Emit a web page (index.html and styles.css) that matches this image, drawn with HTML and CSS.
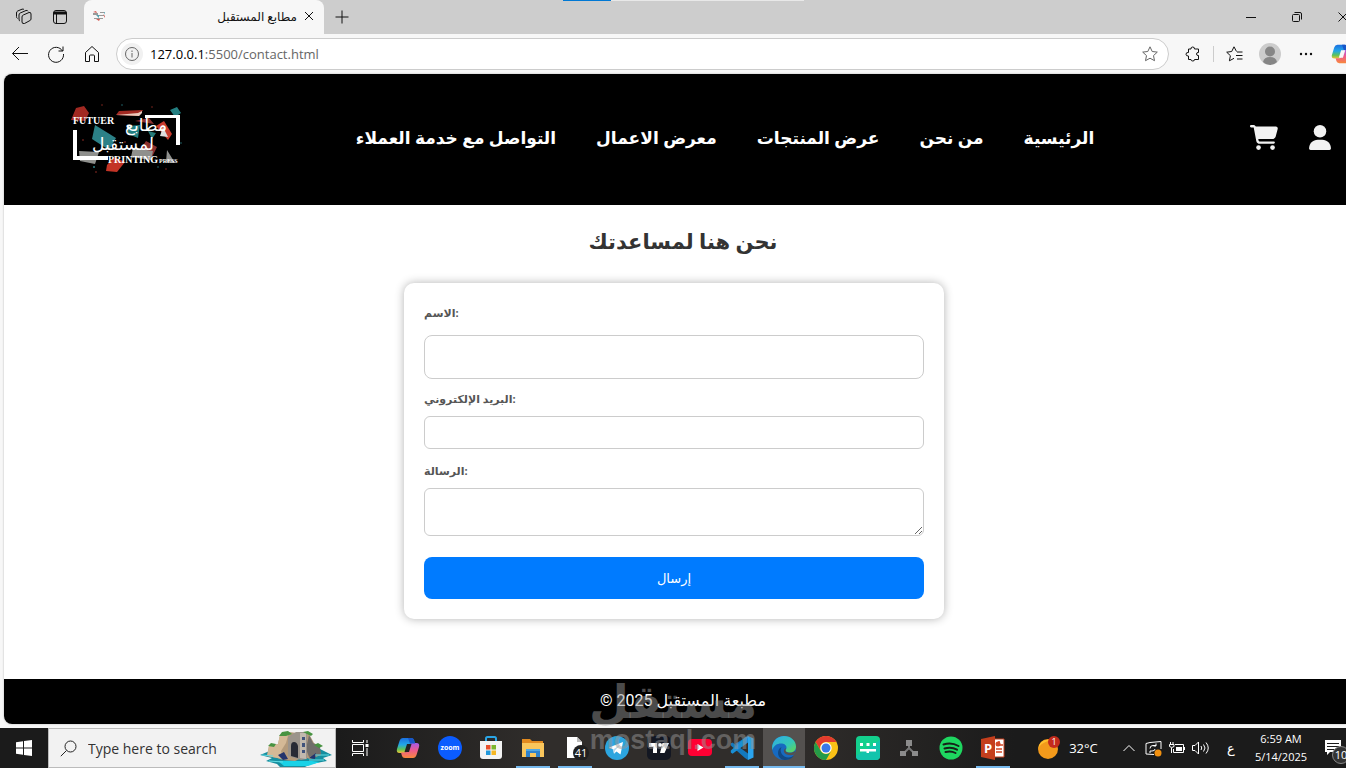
FILE: index.html
```html
<!doctype html>
<html lang="ar">
	<head>
		<meta charset="utf-8" />
		<meta name="viewport" content="width=device-width, initial-scale=1" />
		<title>مطابع المستقبل</title>
		<link rel="stylesheet" href="styles.css">
	</head>
	<body>
		<svg class="defs" width="0" height="0" aria-hidden="true">
			<defs>
				<linearGradient id="cpA" x1="0" y1="0" x2="0" y2="1"><stop offset="0" stop-color="#1b6fe0"/><stop offset=".45" stop-color="#22a7e8"/><stop offset=".75" stop-color="#5cc35a"/><stop offset="1" stop-color="#f2c431"/></linearGradient>
				<linearGradient id="cpB" x1="0" y1="0" x2="0" y2="1"><stop offset="0" stop-color="#a45ae8"/><stop offset=".5" stop-color="#ee5a8c"/><stop offset="1" stop-color="#f8893c"/></linearGradient>
				<linearGradient id="edgeA" x1="0" y1="0" x2="1" y2="1"><stop offset="0" stop-color="#2fa9e8"/><stop offset=".6" stop-color="#35c8b4"/><stop offset="1" stop-color="#66d84a"/></linearGradient>
				<symbol id="copilot" viewBox="0 0 24 24">
					<path d="M7 2h8q2.500 0 3 2l1 3.500h-4q-2 0-2.500 2l-1.500 5Q10.200 17 8 17H3.500Q0 17 1 13L3.500 5Q4.500 2 7 2z" fill="url(#cpA)"/>
					<path d="M17 22H9q-2.500 0-3-2l-1-3.500h4q2 0 2.500-2l1.500-5Q13.800 7 16 7h4.500Q24 7 23 11l-2.500 8Q19.500 22 17 22z" fill="url(#cpB)"/>
					<path d="M11 8h4.500l-2.500 8H8.500z" fill="currentColor"/>
					<path d="M12 2h3q2.500 0 3 2l1 3.500h-5z" fill="#1756c8"/>
				</symbol>
			</defs>
		</svg>

		<div class="window">
			<div class="progress"></div>
			<!-- tabs -->
			<div class="tabbar">
				<button class="tool" aria-label="Workspaces">
					<svg width="18" height="18" viewBox="0 0 18 18"><path d="M7 9q0-1.500 1.300-2l5.700-2.500q2-.5 2 1.500v5q0 1-1 1.500L9.500 15.500Q7 16 7 14z M5 13q-1 0-1-2V7q0-1.500 1.200-2L11 2.500q1.500-.5 2 .8 M2.500 10.500Q1.500 10 1.500 8.500V5q0-1.500 1.200-2L7 1.200q1.500-.5 2 .5" /></svg>
				</button>
				<button class="tool" aria-label="Tab actions">
					<svg width="16" height="16" viewBox="0 0 16 16"><rect x="1.500" y="1.500" width="13" height="13" rx="2.500" /><path d="M2 3h12v2H2z" fill="#111" /><path d="M4.500 5v9" /></svg>
				</button>
				<div class="tab">
					<svg width="14" height="14" viewBox="0 0 14 14" class="plain"><path d="M1 4h5v2H1zM8 3h4v1H8zM7 6h5v1H7zM2 9h9v1H2z" fill="#999"/><path d="M1 3l3-1 1 2zM4 10l3 2 1-2zM11 5l2 2 0 2z" fill="#d55a52"/><path d="M4 6l3 0 0 3zM12 3l1 0 0 3z" fill="#54a3b1"/></svg>
					<span class="tab-title" dir="rtl">مطابع المستقبل</span>
					<button class="tab-close" aria-label="Close tab"><svg width="10" height="10" viewBox="0 0 10 10"><path d="M1 1l8 8M9 1l-8 8" /></svg></button>
				</div>
				<button class="tool" aria-label="New tab"><svg width="14" height="14" viewBox="0 0 14 14"><path d="M7 .5v13M.5 7h13" /></svg></button>
				<div class="winctl">
					<button aria-label="Minimize"><svg width="10" height="10" viewBox="0 0 10 10"><path d="M0 5.500h10" /></svg></button>
					<button aria-label="Restore"><svg width="12" height="12" viewBox="0 0 12 12"><rect x="1.500" y="3.500" width="7" height="7" rx="1" /><path d="M3.500 1.500H9q1.500 0 1.500 1.500v5.500" /></svg></button>
					<button aria-label="Close"><svg width="10" height="10" viewBox="0 0 10 10"><path d="M.5.500l9 9M9.500.500l-9 9" /></svg></button>
				</div>
			</div>

			<!-- toolbar -->
			<div class="toolbar">
				<button class="tool" aria-label="Back"><svg width="18" height="18" viewBox="0 0 18 18"><path d="M17 8.500H1.500M8 2L1.500 8.500 8 15" /></svg></button>
				<button class="tool" aria-label="Reload"><svg width="18" height="18" viewBox="0 0 18 18"><path d="M15.500 6A7.500 7.500 0 1 0 16.500 9M16 1.500V6h-4.500" /></svg></button>
				<button class="tool" aria-label="Home"><svg width="16" height="18" viewBox="0 0 16 18"><path d="M1.500 7.500L8 1.500l6.500 6V16.500h-4V11q0-1-1-1h-3q-1 0-1 1v5.500h-4z" /></svg></button>
				<div class="address">
					<span class="info"><svg width="14" height="14" viewBox="0 0 14 14"><circle cx="7" cy="7" r="6.500" /><path d="M7 6v4.500M7 3.500V5" /></svg></span>
					<a class="url" href="contact.html"><b>127.0.0.1</b>:5500/contact.html</a>
					<button class="star" aria-label="Add to favorites"><svg width="16" height="16" viewBox="0 0 16 16"><path d="M8 .8l2.200 4.700 5.100.6-3.800 3.500 1 5.100L8 12.200l-4.500 2.500 1-5.100L.7 6.100l5.100-.6z" /></svg></button>
				</div>
				<button class="tool" aria-label="Extensions"><svg width="16" height="16" viewBox="0 0 16 16"><path d="M3.500 3H6q-.3-2 1.700-2T9.500 3H13.500V6.500q-2-.3-2 1.500t2 1.500v4H9.500q.1 1.500-1.700 1.500T6 13.500H3.500V10Q1 10.200 1 8.200T3.500 6.500z" /></svg></button>
				<span class="divider"></span>
				<button class="tool" aria-label="Favorites"><svg width="17" height="16" viewBox="0 0 17 16"><path d="M10.500 5.500L8 .8 5.700 5.500.7 6.200l3.700 3.500-1 5.100L8 12.300M11 6h5.500M10 9.500h6.500M11 13h5.500" /></svg></button>
				<button class="tool" aria-label="Profile"><svg width="22" height="22" viewBox="0 0 22 22" class="plain"><circle cx="11" cy="11" r="11" fill="#ccc"/><circle cx="11" cy="8.500" r="5" fill="#868686"/><path d="M4 19q1-5 7-5t7 5q-3 3-7 3t-7-3z" fill="#868686"/></svg></button>
				<button class="tool" aria-label="Settings and more"><svg width="14" height="4" viewBox="0 0 14 4" class="plain"><circle cx="2" cy="2" r="1.200"/><circle cx="7" cy="2" r="1.200"/><circle cx="12" cy="2" r="1.200"/></svg></button>
				<button class="tool copilot-light" aria-label="Copilot"><svg width="22" height="22" class="plain"><use href="#copilot" /></svg></button>
			</div>

			<!-- web page -->
			<div class="page">
				<header class="site-header">
					<a class="logo" href="#" aria-label="Futuer Printing Press">
						<svg width="150" height="90" viewBox="0 0 150 90">
							<path d="M21 27l5-12 8-2 5 7-4 8zM66 22l3-4 24-1-4 6z" fill="#a12922"/>
							<path d="M66 22l23 1 3-3v-2l-4 2z" fill="#e9c9bb"/>
							<path d="M106 33l8-5 8 13-4 6z" fill="#c73a2c"/>
							<path d="M113 34l5 10-8-1z" fill="#ddd"/>
							<path d="M45 32l21 13-7 12-17-11z" fill="#2c8187"/>
							<path d="M77 33l13-1-2 13-10-4zM120 17l7-3 4 6-6 4z" fill="#237e80"/>
							<path d="M96 48l11 6-5 10-12-7zM85 28l14-3 5 6z" fill="#8c3230"/>
							<path d="M29 58l20 1-4 12-15-3zM83 55l20 3-2 9-20-3zM117 57l8 13-9-1z" fill="#8f908d"/>
							<path d="M57 72l7-8 11 5-8 10-11-1z" fill="#c33426"/>
							<path d="M98 38l8 2-4 6z" fill="#257b79"/>
							<g fill="#9d3028"><circle cx="52" cy="12" r=".7"/><circle cx="33" cy="47" r=".8"/><circle cx="46" cy="79" r=".8"/><circle cx="102" cy="14" r=".7"/><circle cx="116" cy="76" r=".7"/><circle cx="75" cy="49" r=".8"/></g>
							<g fill="#2c8187"><circle cx="72" cy="12" r=".7"/><circle cx="44" cy="74" r="1"/><circle cx="108" cy="74" r=".7"/><circle cx="131" cy="50" r=".7"/></g>
							<path d="M95 22h35v30h-4V25H95zM23 37h4v26h31v4H23z" fill="#fff"/>
							<text x="23" y="31" class="logo-lat">FUTUER</text>
							<text x="117" y="38" class="logo-ar">مطابع</text>
							<text x="104" y="57" class="logo-ar">لمستقبل</text>
							<text x="58" y="70" class="logo-lat">PRINTING</text>
							<text x="109" y="70" class="logo-sub">PRESS</text>
						</svg>
					</a>
					<nav class="site-nav" dir="rtl">
						<a href="#">الرئيسية</a>
						<a href="#">من نحن</a>
						<a href="#">عرض المنتجات</a>
						<a href="#">معرض الاعمال</a>
						<a href="#">التواصل مع خدمة العملاء</a>
					</nav>
					<div class="site-icons">
						<a href="#" aria-label="Cart"><svg width="28" height="25" viewBox="0 0 576 512"><path d="M0 24C0 10.700 10.700 0 24 0h45.500c22 0 41.500 12.800 50.600 32h411c26.300 0 45.500 25 38.600 50.400l-41 152.300c-8.500 31.400-37 53.300-69.500 53.300H170.700l5.400 28.500c2.200 11.300 12.100 19.500 23.600 19.500H488c13.300 0 24 10.700 24 24s-10.700 24-24 24H199.700c-34.600 0-64.300-24.600-70.700-58.500L77.400 54.500c-.7-3.800-4-6.500-7.900-6.500H24C10.700 48 0 37.300 0 24z"/><circle cx="176" cy="464" r="48"/><circle cx="464" cy="464" r="48"/></svg></a>
						<a href="#" aria-label="Account"><svg width="22" height="25" viewBox="0 0 448 512"><circle cx="224" cy="128" r="128"/><path d="M178.300 304C79.800 304 0 383.800 0 482.300 0 498.700 13.300 512 29.700 512h388.600c16.400 0 29.700-13.300 29.700-29.700C448 383.800 368.200 304 269.700 304z"/></svg></a>
					</div>
				</header>

				<main class="contact">
					<h1 dir="rtl">نحن هنا لمساعدتك</h1>
					<form class="card">
						<label for="name">الاسم:</label>
						<input type="text" id="name" class="field tall" />
						<label for="email">البريد الإلكتروني:</label>
						<input type="email" id="email" class="field" />
						<label for="message">الرسالة:</label>
						<textarea id="message" class="field area"></textarea>
						<button type="button" class="send">إرسال</button>
					</form>
				</main>

				<footer class="site-footer">© 2025 مطبعة المستقبل</footer>
			</div>

			<div class="watermark">
				<span class="wm-ar">مستقل</span>
				<span class="wm-lat">mostaql.com</span>
			</div>

			<!-- taskbar -->
			<div class="taskbar">
				<button class="start" aria-label="Start"><svg width="16" height="16" viewBox="0 0 16 16"><path d="M0 2.200L7 1.200v6.300H0zM8 1l8-1v7.500H8zM0 8.500h7v6.300l-7-1zM8 8.500h8V16l-8-1z" fill="#fff"/></svg></button>
				<div class="search">
					<svg width="17" height="17" viewBox="0 0 17 17"><circle cx="10.500" cy="6.500" r="5.500" fill="none" stroke="#222"/><path d="M6.500 10.500L.8 16.200" stroke="#222"/></svg>
					<input type="text" placeholder="Type here to search" aria-label="Type here to search" />
					<svg class="scene" width="72" height="38" viewBox="0 0 72 38">
						<path d="M0 26l12-5 48-1 12 6-9 3 4 3-16 3-6 3H20l-3-3-11-3 6-3z" fill="#168e9f"/>
						<path d="M18 32h34l8 1-12 4H24z" fill="#19d2e7"/>
						<path d="M7 27l2-10 9-2 2-9 9-3 8 1 12 1 5 9 5 3 2 9-11 4-6-2-9 4-12-1-6-2z" fill="#b39a7b"/>
						<path d="M7 27l2-10 9-2 2-9 9-3-3 11-5 8 2 8z" fill="#d4b996"/>
						<path d="M49 6l4 8 7 4 1 8-12 2-3-8z" fill="#716e6b"/>
						<path d="M28 8l8-5h11v27l-6 1-13-4z" fill="#9b948c"/>
						<path d="M40 4h6v26l-6-1z" fill="#c1b9ae"/>
						<path d="M31 27V17q0-4 3-4t4 4v12z" fill="#272a35"/>
						<path d="M42 8h3v3h-3zM42 14h3v4h-3zM42 21h3v3h-3z" fill="#3f537c"/>
						<path d="M18 26l6-3 4 7-5 1zM49 29l7-5-1 6z" fill="#23336c"/>
						<path d="M19 7l3-4 6-1 4 3-6 2zM8 17l3-3 5 1-2 3zM43 3l5-1 5 3-2 2zM54 16l4-2 5 3-4 2z" fill="#489341"/>
						<path d="M2 26l11 1M55 26l14 0M49 31l15 0M9 32l14 1" stroke="#64dce4"/>
					</svg>
				</div>
				<button class="taskview" aria-label="Task view"><svg width="17" height="16" viewBox="0 0 17 16"><path d="M.5 0v2.500h11V0M.5 16v-2.500h11V16M.5 4.500h11v7H.5zM15 0v3M15 8v8" fill="none" stroke="#fff"/><path d="M13.500 4h3v3h-3z" fill="#fff"/></svg></button>

				<div class="apps">
					<button aria-label="Copilot" class="copilot-dark"><svg width="24" height="24"><use href="#copilot" /></svg></button>
					<button aria-label="Zoom"><svg width="24" height="24" viewBox="0 0 24 24"><circle cx="12" cy="12" r="12" fill="#0b5cff"/><text x="12" y="14" text-anchor="middle" class="zoom-text">zoom</text></svg></button>
					<button aria-label="Store"><svg width="24" height="24" viewBox="0 0 24 24"><path d="M7 7V2.500Q7 1 8.500 1h7Q17 1 17 2.500V7" fill="none" stroke="#2aa5e5" stroke-width="2"/><path d="M1 5h22v15q0 3-3 3H4q-3 0-3-3z" fill="#f3f3f3"/><path d="M7 9h4.500v4.500H7z" fill="#e8502c"/><path d="M12.500 9H17v4.500h-4.500z" fill="#7bb52c"/><path d="M7 14.500h4.500V19H7z" fill="#2198db"/><path d="M12.500 14.500H17V19h-4.500z" fill="#f5b622"/></svg></button>
					<button aria-label="File Explorer" class="open"><svg width="24" height="22" viewBox="0 0 24 22"><path d="M1 2h8l2 2h11v5H1z" fill="#e28a1f"/><path d="M1 6h22v14H1z" fill="#f9c65c"/><path d="M5 20v-8h14v8h-4v-4H9v4z" fill="#2f83cd"/><path d="M5 12h14v2H5z" fill="#51a8e4"/></svg></button>
					<button aria-label="Document" class="open"><svg width="28" height="24" viewBox="0 0 28 24"><path d="M6 1h10l5 5v16H6z" fill="#fff"/><path d="M16 1v5h5z" fill="#bbb"/><circle cx="20" cy="17" r="8" fill="#202020"/><text x="20" y="21" text-anchor="middle" class="badge-text">41</text></svg></button>
					<button aria-label="Telegram"><svg width="24" height="24" viewBox="0 0 24 24"><circle cx="12" cy="12" r="12" fill="#2ca5df"/><path d="M4 11.500L18 6l-2.500 12.500-4-3-2.500 2.300-.8-4.300z" fill="#fff"/><path d="M8.200 13.500L16 8l-6 6.500-1 3.300z" fill="#b9d9ec"/></svg></button>
					<button aria-label="TradingView"><svg width="24" height="24" viewBox="0 0 24 24"><rect width="24" height="24" rx="5" fill="#131722"/><path d="M2 7h8v10H6v-6H2zM15.500 7H22l-4.500 10H13z" fill="#fff"/><circle cx="13" cy="9" r="2" fill="#fff"/></svg></button>
					<button aria-label="YouTube"><svg width="24" height="18" viewBox="0 0 24 18"><rect width="24" height="17" rx="4" fill="#ff0033"/><path d="M9.500 5v7l6-3.500z" fill="#fff"/></svg></button>
					<button aria-label="Visual Studio Code" class="open"><svg width="24" height="24" viewBox="0 0 24 24"><path d="M18 0L7 10 2.500 6.500.8 7.500v2L15 22l3 2V17.500L5 8z" fill="#1379be"/><path d="M18 0l5.500 2.500v19L18 24z" fill="#2ba4ee"/><path d="M18 0v6.500L2.500 17.800.8 16.500v-2L15 1.500z" fill="#198fd5"/></svg></button>
					<button aria-label="Edge" class="open active"><svg width="24" height="24" viewBox="0 0 24 24"><circle cx="12" cy="12" r="12" fill="#176ac0"/><path d="M.2 10C1.500 3.500 6.500 0 12 0c7 0 12 5 12 10.500 0 4-3 6-6 6-3.500 0-4.500-1.200-4.500-2 0-.7 1-1 1-3C14.500 9 12 7.500 9 7.500 5 7.500 2 9.500.2 14z" fill="url(#edgeA)"/><path d="M9.500 11c-2.500 4.500 1 10.500 7 10.500 2 0 3.800-.7 5.300-2-2 3.500-5.800 4.500-9.300 4.500C5 23.500 4 13.500 9.500 11z" fill="#124983"/><path d="M14 12c-1 2-1 4 3 4.800 2.500.2 4.500-.5 6.300-2L22.500 18.500c-3 1.500-9 1-10.500-2.500-.5-2 .8-3.500 2-4z" fill="#54514f"/></svg></button>
					<button aria-label="Chrome"><svg width="24" height="24" viewBox="0 0 24 24"><circle cx="12" cy="12" r="12" fill="#fbc116"/><path d="M1.600 6A12 12 0 0 1 22.400 6H12a6 6 0 0 0-5.200 9z" fill="#e33b2e"/><path d="M1.600 6A12 12 0 0 0 12 24l5.200-9A6 6 0 0 1 6.800 15z" fill="#259b48"/><circle cx="12" cy="12" r="5.700" fill="#fff"/><circle cx="12" cy="12" r="4.500" fill="#3978e8"/></svg></button>
					<button aria-label="Keyboard"><svg width="24" height="24" viewBox="0 0 24 24"><rect width="24" height="24" rx="4" fill="#13d08d"/><path d="M0 20L24 4v16q0 4-4 4H4q-4 0-4-4z" fill="#12c4ac"/><path d="M4 7h3v3H4zM10.500 7h3v3h-3zM17 7h3v3h-3zM4 13h16v2.500h-7v1.500h-2.500v-1.500H4z" fill="#fff"/></svg></button>
					<button aria-label="Network"><svg width="18" height="18" viewBox="0 0 18 18"><path d="M9 5v4L4 14M9 9l5 5" stroke="#777" stroke-width="2" fill="none"/><path d="M6 1h6v6H6zM0 12h6v5H0zM12 12h6v5h-6z" fill="#8b8b8b"/></svg></button>
					<button aria-label="Spotify"><svg width="24" height="24" viewBox="0 0 24 24"><circle cx="12" cy="12" r="11.500" fill="#1ed760"/><path d="M4.500 8.500q8-2.500 15 1.500M5.500 12.500q7-2 12.500 1.200M6.500 16q5.500-1.500 10 1" fill="none" stroke="#162119" stroke-width="2" stroke-linecap="round"/></svg></button>
					<button aria-label="PowerPoint" class="open"><svg width="24" height="24" viewBox="0 0 24 24"><path d="M11 3h12v18H11z" fill="#fff" stroke="#c43e1c"/><path d="M15 13h6M15 16h6M18 5v4h4" stroke="#d24726" stroke-width="1.500" fill="none"/><circle cx="17" cy="8" r="2.500" fill="#d24726"/><path d="M0 3l14-3v24L0 21z" fill="#c43e1c"/><text x="7" y="17" text-anchor="middle" class="ppt-text">P</text></svg></button>
				</div>

				<div class="tray">
					<button class="weather"><svg width="22" height="24" viewBox="0 0 22 24"><circle cx="10" cy="13" r="10" fill="#f39a1b"/><path d="M0 13q2-11 13-9-11 3-13 9z" fill="#ffc02e"/><circle cx="16" cy="6" r="6" fill="#c42b1c"/><text x="16" y="9" text-anchor="middle" class="alert-text">1</text></svg><span>32°C</span></button>
					<button aria-label="Show hidden icons"><svg width="12" height="8" viewBox="0 0 12 8"><path d="M.5 7L6 1.500 11.500 7" /></svg></button>
					<button aria-label="Update"><svg width="17" height="17" viewBox="0 0 17 17"><path d="M5 2.500l11-1V9M9 14.500l-8-.5V3.500l4-1M5 8.500q0-3 3-3h3M11 3.500V6H8.500M10 9q0 2-3 2H5M5 13v-2" /><circle cx="13" cy="13" r="3.500" fill="#f29111" stroke="none"/></svg></button>
					<button aria-label="Battery"><svg width="16" height="12" viewBox="0 0 16 12"><path d="M6 2.500h8.500v8h-10V7M15.500 5v3" /><path d="M7 5h6v4H7z" fill="#fff" stroke="none"/><path d="M1.500 0v2M4 0v2M.5 2.500h4.500v2q-2 2-4.500 0zM2.500 6v5" /></svg></button>
					<button aria-label="Volume"><svg width="18" height="14" viewBox="0 0 18 14"><path d="M.5 4.500H3L6.500 1v12L3 9.500H.5zM9 5q1.500 2 0 4M11.500 3.500q3 3.500 0 7M14 1.500q4.500 5.500 0 11" /></svg></button>
					<button class="lang">ع</button>
					<button class="clock"><span>6:59 AM</span><span>5/14/2025</span></button>
					<button class="notes" aria-label="Notifications"><svg width="18" height="16" viewBox="0 0 18 16"><path d="M1 0h16v12H6l-3 3v-3H1z" fill="#fff" stroke="none"/><path d="M3 3.500h12M3 6.500h12M3 9.500h8" stroke="#1c1c1c"/></svg><span class="count">10</span></button>
				</div>
			</div>
		</div>
	</body>
</html>
```
FILE: styles.css
```css
* {
	box-sizing: border-box;
}
body {
	margin: 0;
	font-family: "Open Sans", "DejaVu Sans", sans-serif;
	background-color: #f7f7f7;
}
button {
	margin: 0;
	padding: 0;
	border: 0;
	background: none;
	font: inherit;
	color: inherit;
}
a {
	color: inherit;
	text-decoration: none;
}
svg {
	display: block;
	flex: none;
}
.defs {
	position: absolute;
}
.window {
	position: relative;
	display: flex;
	flex-direction: column;
	min-height: 100vh;
	overflow: hidden;
}
.progress {
	position: absolute;
	top: 0;
	left: 563px;
	width: 241px;
	height: 1px;
	background: linear-gradient(to right, #0078d4 20%, #e8e8e8 20%);
}

/* browser */
.tabbar, .toolbar {
	display: flex;
	align-items: center;
	color: #111;
}
.tabbar svg, .toolbar svg {
	fill: none;
	stroke: currentColor;
}
.tabbar .plain, .toolbar .plain {
	fill: #111;
	stroke: none;
}
.tabbar {
	height: 34px;
	padding-left: 6px;
	margin-right: -20px;
	background-color: #cdcdcd;
}
.tool {
	display: flex;
	flex: none;
	align-items: center;
	justify-content: center;
	width: 36px;
	height: 32px;
}
.tab {
	display: flex;
	align-items: center;
	gap: 7px;
	width: 240px;
	height: 34px;
	margin-left: 6px;
	padding: 0 10px 2px 8px;
	border-radius: 8px 8px 0 0;
	background-color: #f7f7f7;
	font-size: 12px;
}
.tab-title {
	flex: 1;
}
.winctl {
	display: flex;
	margin-left: auto;
}
.winctl button {
	display: flex;
	align-items: center;
	justify-content: center;
	width: 46px;
	height: 32px;
}
.toolbar {
	height: 40px;
	padding-left: 2px;
	margin-right: -14px;
}
.toolbar .copilot-light {
	color: #f7f7f7;
}
.address {
	display: flex;
	flex: 1;
	align-items: center;
	height: 32px;
	margin: 0 6px;
	padding: 0 10px 0 4px;
	border: 1px solid #ccc;
	border-radius: 16px;
	background-color: #fff;
	color: #666;
}
.info {
	display: flex;
	align-items: center;
	justify-content: center;
	width: 22px;
	height: 22px;
	border-radius: 50%;
	background-color: #f1f1f1;
}
.url {
	flex: 1;
	margin-left: 7px;
	font-size: 13px;
}
.url b {
	font-weight: normal;
	color: #000;
}
.divider {
	width: 1px;
	height: 16px;
	margin: 0 2px;
	background-color: #ccc;
}

/* site */
.page {
	display: flex;
	flex: 1;
	flex-direction: column;
	margin: 0 0 4px 4px;
	border-radius: 8px 0 0 8px;
	overflow: hidden;
	background-color: #fff;
	box-shadow: 0 0 2px #aaa;
}
.site-header {
	display: flex;
	align-items: center;
	justify-content: space-between;
	height: 131px;
	padding: 0 15px 4px 46px;
	background-color: #000;
	color: #fff;
}
.logo-lat, .logo-sub {
	fill: #fff;
	font-family: "Liberation Serif", serif;
	font-size: 10px;
	font-weight: bold;
}
.logo-sub {
	font-size: 6px;
}
.logo-ar {
	fill: #fff;
	font-family: "DejaVu Sans", sans-serif;
	font-size: 17px;
	text-anchor: end;
}
.site-nav {
	display: flex;
	gap: 40px;
	font-size: 17px;
	font-weight: bold;
}
.site-icons {
	display: flex;
	gap: 31px;
	fill: #f2f2f2;
}
.contact {
	flex: 1;
	padding: 20px 2px 20px 0;
}
h1 {
	margin: 0 0 26px;
	padding-left: 18px;
	font-size: 21px;
	line-height: 32px;
	text-align: center;
	color: #333;
}
.card {
	display: flex;
	flex-direction: column;
	width: 540px;
	max-width: 100%;
	margin: 0 auto;
	padding: 20px;
	border-radius: 10px;
	box-shadow: 0 0 10px rgba(0, 0, 0, .3);
}
label {
	margin-bottom: 7px;
	font-size: 11px;
	font-weight: bold;
	line-height: 20px;
	color: #555;
}
.field {
	width: 100%;
	height: 33px;
	margin: 0 0 12px;
	padding: 8px;
	border: 1px solid #ccc;
	border-radius: 6px;
	font: inherit;
}
.tall {
	height: 44px;
	margin: 5px 0 10px;
	border-radius: 8px;
}
.area {
	height: 48px;
	margin-bottom: 21px;
}
.send {
	height: 42px;
	border-radius: 8px;
	background-color: #007bff;
	color: #fff;
	font-family: "Liberation Sans", "DejaVu Sans", sans-serif;
	font-size: 13px;
}
.site-footer {
	padding: 0 0 2px 16px;
	background-color: #000;
	color: #fff;
	font-family: Roboto, "DejaVu Sans", sans-serif;
	font-size: 16px;
	line-height: 43px;
	text-align: center;
}
.watermark {
	position: absolute;
	right: 0;
	bottom: 10px;
	left: 0;
	z-index: 1;
	display: flex;
	flex-direction: column;
	align-items: center;
	font-weight: bold;
	color: rgba(150, 150, 150, .5);
	pointer-events: none;
}
.wm-ar {
	font-size: 46px;
	line-height: 44px;
}
.wm-lat {
	font-family: "Liberation Sans", sans-serif;
	font-size: 27px;
	line-height: 36px;
}

/* taskbar */
.taskbar {
	display: flex;
	height: 40px;
	margin-right: -7px;
	background: linear-gradient(to right, #1b1b1b 25%, #302d2b 40%, #302d2b 58%, #1b1b1b 75%);
	color: #fff;
}
.taskbar button {
	display: flex;
	align-items: center;
	justify-content: center;
}
.start {
	width: 48px;
}
.search {
	display: flex;
	align-items: center;
	width: 288px;
	padding: 0 3px 0 11px;
	border: 1px solid #bbb;
	background-color: #f2f2f2;
}
.search input {
	flex: 1;
	min-width: 0;
	padding: 0 0 0 11px;
	border: 0;
	background: none;
	font: inherit;
	font-size: 14px;
}
.search input::placeholder {
	color: #333;
}
.taskview {
	width: 48px;
}
.apps {
	display: grid;
	grid-template-columns: repeat(15, 1fr);
	width: 627px;
	margin-left: 3px;
}
.apps button {
	position: relative;
}
.apps .copilot-dark {
	color: #222;
}
.apps .active {
	background-color: #54514f;
}
.apps .open::after {
	content: "";
	position: absolute;
	right: 4px;
	bottom: 0;
	left: 4px;
	height: 2px;
	background-color: #76b9ed;
}
.apps .active::after {
	right: 0;
	left: 0;
}
.zoom-text {
	fill: #fff;
	font-size: 7px;
	font-weight: bold;
}
.badge-text {
	fill: #fff;
	font-size: 11px;
}
.ppt-text {
	fill: #fff;
	font-size: 13px;
	font-weight: bold;
}
.alert-text {
	fill: #fff;
	font-size: 9px;
}
.tray {
	display: flex;
	margin-left: auto;
	font-size: 13px;
}
.tray button {
	width: 24px;
}
.tray svg {
	fill: none;
	stroke: #fff;
}
.tray text {
	fill: #fff;
	stroke: none;
}
.tray .weather {
	gap: 9px;
	width: 70px;
	margin-right: 14px;
}
.weather svg {
	stroke: none;
}
.tray .lang {
	width: 36px;
}
.tray .clock {
	flex-direction: column;
	width: 64px;
	font-size: 11px;
	line-height: 18px;
}
.tray .notes {
	position: relative;
	width: 40px;
}
.count {
	position: absolute;
	right: 3px;
	bottom: 4px;
	width: 18px;
	height: 18px;
	border: 1px solid #888;
	border-radius: 50%;
	background-color: #333;
	font-size: 11px;
	line-height: 16px;
}
```
